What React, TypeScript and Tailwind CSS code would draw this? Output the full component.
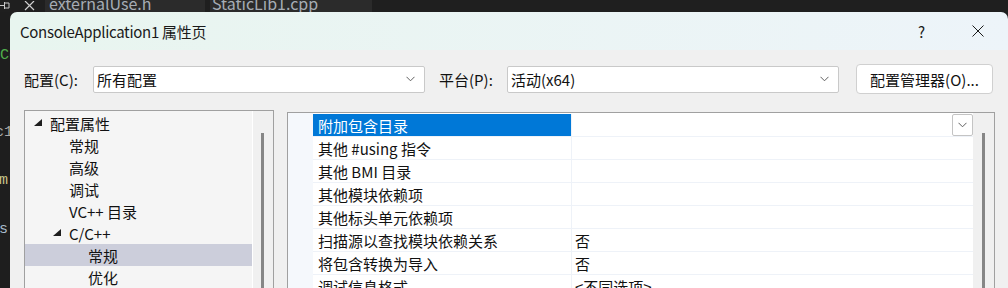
import React from 'react'

const CJK = "font-['Noto_Sans_CJK_SC',sans-serif]"

function Chevron({ className = '' }: { className?: string }) {
  return (
    <svg width="9" height="6" viewBox="0 0 9 6" className={className}>
      <path d="M0.5 0.8 L4.5 4.8 L8.5 0.8" fill="none" stroke="#5f5f5f" strokeWidth="1" />
    </svg>
  )
}

function Triangle() {
  return (
    <svg width="8" height="7" viewBox="0 0 8 7">
      <polygon points="8,0 8,7 0,7" fill="#1e1e1e" />
    </svg>
  )
}

function Select({ value }: { value: string }) {
  return (
    <div className="flex h-[27px] w-[332px] items-center justify-between rounded-[2px] border border-[#c9c9c9] bg-white pl-[3px] pr-[9px]">
      <span className="text-[15px] leading-none text-[#111]">{value}</span>
      <Chevron />
    </div>
  )
}

const tree: { label: string; depth: number; open?: boolean; selected?: boolean }[] = [
  { label: '配置属性', depth: 0, open: true },
  { label: '常规', depth: 1 },
  { label: '高级', depth: 1 },
  { label: '调试', depth: 1 },
  { label: 'VC++ 目录', depth: 1 },
  { label: 'C/C++', depth: 1, open: true },
  { label: '常规', depth: 2, selected: true },
  { label: '优化', depth: 2 },
]

const props: { name: string; value?: string }[] = [
  { name: '附加包含目录' },
  { name: '其他 #using 指令' },
  { name: '其他 BMI 目录' },
  { name: '其他模块依赖项' },
  { name: '其他标头单元依赖项' },
  { name: '扫描源以查找模块依赖关系', value: '否' },
  { name: '将包含转换为导入', value: '否' },
  { name: '调试信息格式', value: '<不同选项>' },
]

function TreeRow({ label, depth, open, selected }: (typeof tree)[number]) {
  const textLeft = ['pl-[25px]', 'pl-[44px]', 'pl-[63px]'][depth]
  return (
    <div
      className={`relative flex h-[22px] items-center ${textLeft} ${selected ? 'bg-[#cccedb]' : ''}`}
    >
      {open ? (
        <span className={`absolute top-[7px] ${depth === 0 ? 'left-[9px]' : 'left-[28px]'}`}>
          <Triangle />
        </span>
      ) : null}
      <span className="text-[15px] leading-none text-[#111]">{label}</span>
    </div>
  )
}

export default function App() {
  return (
    <div className={`flex h-[288px] w-[1008px] flex-col overflow-hidden bg-[#1f1f1f] ${CJK}`}>
      {/* editor tab strip, mostly hidden behind the dialog */}
      <div className="flex h-[12px] shrink-0 items-start overflow-hidden">
        <div className="flex h-[12px] w-[45px] items-start gap-[14px] pt-[1px]">
          <svg width="10" height="9" viewBox="0 0 10 9">
            <path d="M0 4.5 H4 M4.5 1 V8 M4.5 2 H9 V7 H4.5" fill="none" stroke="#c8c8c8" strokeWidth="1" />
          </svg>
          <svg width="11" height="10" viewBox="0 0 11 10">
            <path d="M1 0 L10 9 M10 0 L1 9" stroke="#cfcfcf" strokeWidth="1.2" />
          </svg>
        </div>
        <div className="flex h-[12px] w-[160px] items-start bg-[#2b2b2b] pl-[4px]">
          <span className="mt-[-5px] whitespace-nowrap text-[16px] leading-none text-[#a6adb5]">externalUse.h</span>
        </div>
        <div className="ml-[5px] flex h-[12px] w-[162px] items-start bg-[#2b2b2b] pl-[2px]">
          <span className="mt-[-5px] whitespace-nowrap text-[16px] leading-none text-[#a6adb5]">StaticLib1.cpp</span>
        </div>
      </div>

      <div className="flex min-h-0 flex-1">
        {/* code behind the dialog */}
        <div className="flex w-[10px] shrink-0 flex-col overflow-hidden bg-[#1e1e1e] font-['Liberation_Mono',monospace] text-[15px] leading-none">
          <span className="mt-[36px] whitespace-nowrap text-[#4fae4c]">Co</span>
          <span className="ml-[-5px] mt-[62px] whitespace-nowrap text-[#a9a9a9]">c1</span>
          <span className="ml-[-1px] mt-[33px] whitespace-nowrap text-[#c8c58a]">m</span>
          <span className="ml-[-1px] mt-[34px] whitespace-nowrap text-[#a9bccd]">s</span>
        </div>

        {/* dialog */}
        <div className="flex min-w-0 flex-1 flex-col overflow-hidden rounded-t-[7px]">
          <div className="flex h-[38px] shrink-0 items-center bg-gradient-to-r from-[#e8f5ef] to-[#edf4f9] pl-[10px]">
            <span className="text-[15px] leading-none tracking-[-0.3px] text-[#1a1a1a]">ConsoleApplication1 属性页</span>
            <span className="ml-auto text-[15px] leading-none text-[#1a1a1a]">?</span>
            <svg width="12" height="12" viewBox="0 0 12 12" className="ml-[47px] mr-[24px]">
              <path d="M0.5 0.5 L11.5 11.5 M11.5 0.5 L0.5 11.5" stroke="#1a1a1a" strokeWidth="1" />
            </svg>
          </div>

          <div className="flex flex-1 flex-col bg-[#f0f0f0] pl-[14px]">
            <div className="mt-[14px] flex h-[30px] items-center">
              <span className="w-[69px] text-[15px] leading-none text-[#111]">配置(C):</span>
              <Select value="所有配置" />
              <span className="ml-[14px] w-[68px] text-[15px] leading-none text-[#111]">平台(P):</span>
              <Select value="活动(x64)" />
              <button className="ml-[17px] flex h-[30px] w-[137px] items-center justify-center rounded-[4px] border border-[#d0d0d0] bg-white text-[15px] leading-none text-[#111]">
                配置管理器(O)...
              </button>
            </div>

            <div className="mt-[16px] flex min-h-0 flex-1 items-start">
              {/* tree */}
              <div className="flex h-[200px] w-[250px] border border-[#a0a0a0] bg-[#f5f5f5]">
                <div className="flex w-[227px] flex-col pt-[1px]">
                  {tree.map((t, i) => (
                    <TreeRow key={i} {...t} />
                  ))}
                </div>
                <div className="w-[1px] bg-white" />
                <div className="flex flex-1 justify-center bg-[#f0f0f0] pt-[22px]">
                  <div className="ml-[-2px] h-[200px] w-[3px] bg-[#868686]" />
                </div>
              </div>

              {/* property grid */}
              <div className="ml-[13px] mt-[2px] flex h-[200px] w-[708px] border border-[#a0a0a0] bg-white">
                <div className="w-[25px] bg-[#f5f8fc]" />
                <div className="flex w-[660px] flex-col pt-[1px]">
                  {props.map((p, i) => (
                    <div key={i} className="flex h-[23px] border-b border-[#eef2f8]">
                      <div
                        className={`flex w-[258px] items-center pl-[5px] ${i === 0 ? 'bg-[#0078d7] text-white' : 'text-[#111]'}`}
                      >
                        <span className="whitespace-nowrap text-[15px] leading-none">{p.name}</span>
                      </div>
                      <div className="w-[1px] bg-[#eef2f8]" />
                      <div className="flex flex-1 items-center pl-[3px]">
                        <span className="text-[15px] leading-none text-[#111]">{p.value ?? ''}</span>
                        {i === 0 ? (
                          <div className="ml-auto flex h-[22px] w-[21px] items-center justify-center rounded-[2px] border border-[#c4c4c4] bg-white">
                            <Chevron />
                          </div>
                        ) : null}
                      </div>
                    </div>
                  ))}
                </div>
                <div className="flex flex-1 justify-center bg-[#f0f0f0] pt-[20px]">
                  <div className="h-[200px] w-[3px] bg-[#868686]" />
                </div>
              </div>
            </div>
          </div>
        </div>
      </div>
    </div>
  )
}
